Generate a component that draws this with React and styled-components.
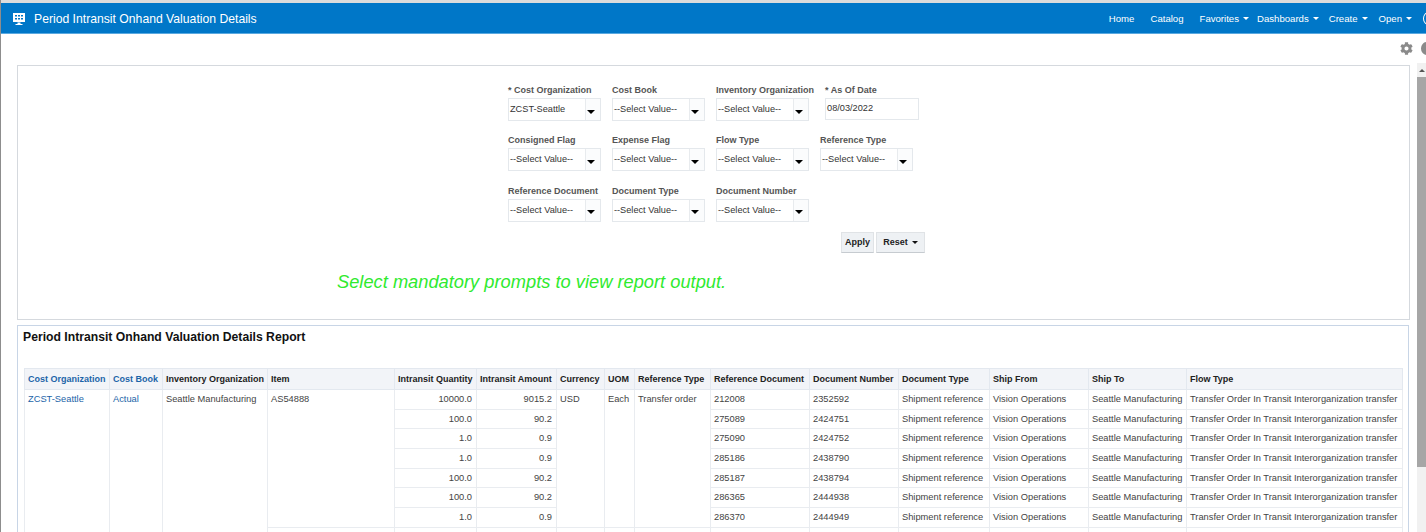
import React from 'react';
import styled, { createGlobalStyle } from 'styled-components';
import { FaCog } from 'react-icons/fa';

const GlobalStyle = createGlobalStyle`
    html, body {
        margin: 0;
        padding: 0;
        height: 532px;
        overflow: hidden;
        background: #fff;
        font-family: "Liberation Sans", Arial, sans-serif;
    }
`;

const Page = styled.div`
    height: 532px;
    overflow: hidden;
    border-left: 1px solid #8d8d8d;
    box-sizing: border-box;
    padding-top: 3px;
    background: linear-gradient(#dcdcdc 0 3px, #fff 3px);
`;

const Header = styled.header`
    height: 31px;
    box-sizing: border-box;
    background: #0077c8;
    border-bottom: 1px solid #5aa9e0;
    padding-top: 1px;
    display: flex;
    align-items: center;
    justify-content: space-between;
    color: #fff;
    overflow: hidden;
`;

const Brand = styled.div`
    display: flex;
    align-items: center;
    gap: 8px;
    padding-left: 11px;
    font-size: 12.2px;
`;

const Nav = styled.nav`
    display: flex;
    align-items: center;
    gap: 11px;
    font-size: 9.6px;
    margin-right: -8px;
`;

const NavItem = styled.span`
    display: flex;
    align-items: center;
    gap: 4px;
    margin-right: ${(p) => p.$after || 0}px;
`;

const Caret = styled.i`
    display: inline-block;
    width: 0;
    height: 0;
    border-left: ${(p) => p.$size || 3}px solid transparent;
    border-right: ${(p) => p.$size || 3}px solid transparent;
    border-top: ${(p) => p.$size || 3}px solid ${(p) => p.$color || '#fff'};
`;

const UserDot = styled.span`
    width: 9px;
    height: 11px;
    border: 1.5px solid #fff;
    border-radius: 50%;
`;

const Toolbar = styled.div`
    height: 29px;
    display: flex;
    align-items: center;
    justify-content: flex-end;
    gap: 8px;
    color: #8a8a8a;
    overflow: hidden;
`;

const ToolDot = styled.span`
    width: 11px;
    height: 13px;
    flex: none;
    background: #8a8a8a;
    border-radius: 50%;
    margin-right: -6px;
`;

const Body = styled.div`
    display: flex;
    align-items: flex-start;
`;

const Main = styled.main`
    width: 1393px;
    margin-left: 16px;
    margin-top: 2px;
    flex: none;
`;

const ScrollTrack = styled.div`
    margin-left: 7px;
    width: 9px;
    height: 469px;
    flex: none;
    background: #f1f1f1;
    display: flex;
    flex-direction: column;
`;

const ScrollArrow = styled.div`
    height: 14px;
    display: flex;
    align-items: center;
    justify-content: center;
`;

const ScrollArrowUp = styled(Caret)`
    transform: rotate(180deg);
`;

const ScrollThumb = styled.div`
    height: 390px;
    background: #a6a6a6;
`;

const PromptPanel = styled.section`
    height: 255px;
    box-sizing: border-box;
    border: 1px solid #d5d9de;
    padding: 18px 0 0 490px;
`;

const PromptRow = styled.div`
    display: flex;
    gap: 11px;
    height: 50.3px;
`;

const Field = styled.div`
    min-width: 93px;
`;

const FieldLabel = styled.label`
    display: block;
    font-size: 9px;
    font-weight: bold;
    color: #555;
    line-height: 12px;
    margin-bottom: 2px;
    white-space: nowrap;
`;

const SelectBox = styled.div`
    width: 93px;
    height: 23px;
    box-sizing: border-box;
    border: 1px solid #e4e8ec;
    background: #fbfcfd;
    display: flex;
    align-items: stretch;
`;

const SelectValue = styled.div`
    width: 77px;
    box-sizing: border-box;
    background: #fff;
    border-right: 1px solid #e8ebee;
    font-size: 9.2px;
    color: #333;
    line-height: 21px;
    padding-left: 1px;
    white-space: nowrap;
`;

const SelectArrow = styled.div`
    flex: 1;
    display: flex;
    align-items: center;
    padding: 4px 0 0 1px;
`;

const DateInput = styled.div`
    width: 94px;
    height: 22px;
    box-sizing: border-box;
    border: 1px solid #e4e8ec;
    background: #fff;
    font-size: 9.2px;
    color: #333;
    line-height: 19px;
    padding-left: 1px;
`;

const ActionRow = styled.div`
    display: flex;
    gap: 2px;
    margin: -3px 0 0 333px;
`;

const ActionButton = styled.button`
    height: 21px;
    width: ${(p) => p.$width}px;
    box-sizing: border-box;
    border: 1px solid #e0e3e6;
    border-bottom-color: #c6cbd0;
    background: #eef1f4;
    font: bold 9px "Liberation Sans", Arial, sans-serif;
    color: #222;
    padding: 0;
    display: flex;
    align-items: center;
    justify-content: center;
    gap: 4px;
`;

const PromptMessage = styled.p`
    margin: 18px 0 0 -171px;
    font-size: 18.3px;
    line-height: 21px;
    font-style: italic;
    color: #2fea2f;
    white-space: nowrap;
`;

const ReportPanel = styled.section`
    margin-top: 5px;
    width: 1392px;
    height: 300px;
    box-sizing: border-box;
    border: 1px solid #c8d5e6;
    border-bottom: 0;
    padding: 4px 0 0 5px;
`;

const ReportTitle = styled.h2`
    margin: 0 0 24px;
    font-size: 12.2px;
    line-height: 14px;
    font-weight: bold;
    color: #111;
`;

const Table = styled.table`
    width: 1378px;
    margin-left: 1px;
    border-collapse: collapse;
    table-layout: fixed;
    font-size: 9.3px;
`;

const Th = styled.th`
    height: 21px;
    box-sizing: border-box;
    padding: 0 4px 1px 3px;
    background: #f2f4f8;
    border: 1px solid #e3e8ef;
    font-size: 9px;
    text-align: left;
    font-weight: bold;
    color: ${(p) => (p.$link ? '#1c64a8' : '#222')};
    white-space: nowrap;
`;

const Td = styled.td`
    height: 19.7px;
    box-sizing: border-box;
    padding: 0 4px 0 3px;
    border: 1px solid #e9ecf0;
    vertical-align: top;
    line-height: 18px;
    text-align: ${(p) => (p.$right ? 'right' : 'left')};
    color: ${(p) => (p.$link ? '#1c64a8' : '#444')};
    white-space: nowrap;
`;

const MonitorIcon = () => (
    <svg width="14" height="14" viewBox="0 0 14 14" fill="#fff">
        <path d="M1 1h12v9H1z" />
        <path d="M5.5 10.5h3v1.5h2v1h-7v-1h2z" />
        <path d="M3 3h2v1.5H3zM6 3h2v1.5H6zM9 3h2v1.5H9zM3 6h2v1.5H3zM6 6h2v1.5H6zM9 6h2v1.5H9z" fill="#0077c8" />
    </svg>
);

const SELECT = '--Select Value--';

const promptRows = [
    [
        { label: '* Cost Organization', value: 'ZCST-Seattle' },
        { label: 'Cost Book', value: SELECT },
        { label: 'Inventory Organization', value: SELECT },
        { label: '* As Of Date', date: '08/03/2022' },
    ],
    [
        { label: 'Consigned Flag', value: SELECT },
        { label: 'Expense Flag', value: SELECT },
        { label: 'Flow Type', value: SELECT },
        { label: 'Reference Type', value: SELECT },
    ],
    [
        { label: 'Reference Document', value: SELECT },
        { label: 'Document Type', value: SELECT },
        { label: 'Document Number', value: SELECT },
    ],
];

const columns = [
    { name: 'Cost Organization', width: 85, link: true },
    { name: 'Cost Book', width: 53, link: true },
    { name: 'Inventory Organization', width: 105 },
    { name: 'Item', width: 127 },
    { name: 'Intransit Quantity', width: 82 },
    { name: 'Intransit Amount', width: 80 },
    { name: 'Currency', width: 48 },
    { name: 'UOM', width: 30 },
    { name: 'Reference Type', width: 76 },
    { name: 'Reference Document', width: 99 },
    { name: 'Document Number', width: 89 },
    { name: 'Document Type', width: 91 },
    { name: 'Ship From', width: 99 },
    { name: 'Ship To', width: 98 },
    { name: 'Flow Type', width: 216 },
];

const rows = [
    ['10000.0', '9015.2', '212008', '2352592'],
    ['100.0', '90.2', '275089', '2424751'],
    ['1.0', '0.9', '275090', '2424752'],
    ['1.0', '0.9', '285186', '2438790'],
    ['100.0', '90.2', '285187', '2438794'],
    ['100.0', '90.2', '286365', '2444938'],
    ['1.0', '0.9', '286370', '2444949'],
];

const DetailCells = ({ row }) => (
    <>
        <Td>{row[2]}</Td>
        <Td>{row[3]}</Td>
        <Td>Shipment reference</Td>
        <Td>Vision Operations</Td>
        <Td>Seattle Manufacturing</Td>
        <Td>Transfer Order In Transit Interorganization transfer</Td>
    </>
);

const App = () => (
    <Page>
        <GlobalStyle />
        <Header>
            <Brand>
                <MonitorIcon />
                Period Intransit Onhand Valuation Details
            </Brand>
            <Nav>
                <NavItem $after={5}>Home</NavItem>
                <NavItem $after={5}>Catalog</NavItem>
                <NavItem $after={-3}>Favorites <Caret /></NavItem>
                <NavItem $after={-1}>Dashboards <Caret /></NavItem>
                <NavItem>Create <Caret /></NavItem>
                <NavItem>Open <Caret /></NavItem>
                <UserDot />
            </Nav>
        </Header>
        <Toolbar>
            <FaCog size={13} />
            <ToolDot />
        </Toolbar>
        <Body>
            <Main>
                <PromptPanel>
                    {promptRows.map((row, i) => (
                        <PromptRow key={i}>
                            {row.map((field) => (
                                <Field key={field.label}>
                                    <FieldLabel>{field.label}</FieldLabel>
                                    {field.date ? (
                                        <DateInput>{field.date}</DateInput>
                                    ) : (
                                        <SelectBox>
                                            <SelectValue>{field.value}</SelectValue>
                                            <SelectArrow><Caret $size={4} $color="#000" /></SelectArrow>
                                        </SelectBox>
                                    )}
                                </Field>
                            ))}
                        </PromptRow>
                    ))}
                    <ActionRow>
                        <ActionButton $width={33}>Apply</ActionButton>
                        <ActionButton $width={49}>Reset <Caret $size={3.5} $color="#111" /></ActionButton>
                    </ActionRow>
                    <PromptMessage>Select mandatory prompts to view report output.</PromptMessage>
                </PromptPanel>
                <ReportPanel>
                    <ReportTitle>Period Intransit Onhand Valuation Details Report</ReportTitle>
                    <Table>
                        <colgroup>
                            {columns.map((c) => <col key={c.name} style={{ width: c.width }} />)}
                        </colgroup>
                        <thead>
                            <tr>
                                {columns.map((c) => <Th key={c.name} $link={c.link}>{c.name}</Th>)}
                            </tr>
                        </thead>
                        <tbody>
                            {rows.map((row, i) => (
                                <tr key={i}>
                                    {i === 0 && (
                                        <>
                                            <Td $link rowSpan={9}>ZCST-Seattle</Td>
                                            <Td $link rowSpan={9}>Actual</Td>
                                            <Td rowSpan={9}>Seattle Manufacturing</Td>
                                            <Td rowSpan={7}>AS54888</Td>
                                        </>
                                    )}
                                    <Td $right>{row[0]}</Td>
                                    <Td $right>{row[1]}</Td>
                                    {i === 0 && (
                                        <>
                                            <Td rowSpan={7}>USD</Td>
                                            <Td rowSpan={7}>Each</Td>
                                            <Td rowSpan={7}>Transfer order</Td>
                                        </>
                                    )}
                                    <DetailCells row={row} />
                                </tr>
                            ))}
                            <tr>
                                {Array.from({ length: 12 }, (_, i) => <Td key={i} />)}
                            </tr>
                        </tbody>
                    </Table>
                </ReportPanel>
            </Main>
            <ScrollTrack>
                <ScrollArrow><ScrollArrowUp $size={3} $color="#555" /></ScrollArrow>
                <ScrollThumb />
            </ScrollTrack>
        </Body>
    </Page>
);

export default App;
